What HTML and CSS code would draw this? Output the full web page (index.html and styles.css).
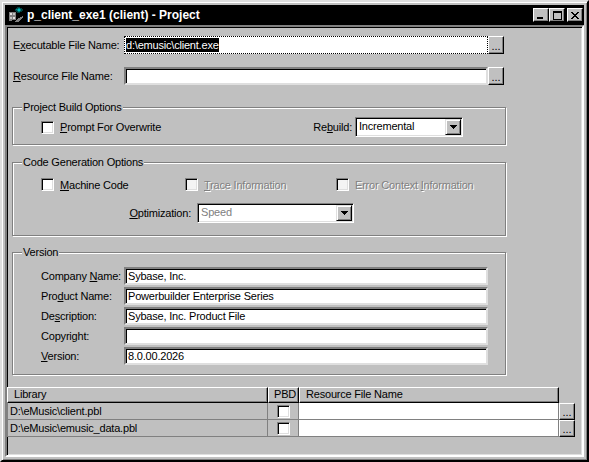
FILE: index.html
```html
<!DOCTYPE html>
<html lang="en">

<head>
    <meta charset="UTF-8">
    <meta name="viewport" content="width=device-width, initial-scale=1.0">
    <title>p_client_exe1 (client) - Project</title>
    <link rel="stylesheet" href="styles.css">
</head>

<body>
    <div class="window">
        <!-- Title bar -->
        <div class="titlebar">
            <svg class="app-icon" width="16" height="16" viewBox="0 0 16 16" shape-rendering="crispEdges">
                <rect x="1" y="5" width="3" height="3" fill="#dfdfdf" stroke="#808080" stroke-width="1"/>
                <rect x="4" y="5" width="3" height="3" fill="#c0c0c0" stroke="#808080" stroke-width="1"/>
                <rect x="1" y="9" width="3" height="3" fill="#c0c0c0" stroke="#808080" stroke-width="1"/>
                <rect x="4" y="9" width="3" height="3" fill="#dfdfdf" stroke="#808080" stroke-width="1"/>
                <rect x="1" y="12" width="3" height="2" fill="#808080"/>
                <polygon points="11,0 15,3 11,6 7,3" fill="#008080" stroke="#004040" stroke-width="1"/>
                <rect x="10" y="2" width="2" height="2" fill="#00c0c0"/>
                <polygon points="9,12 15,9 15,11 10,15 7,15" fill="#808080"/>
            </svg>
            <span class="title">p_client_exe1 (client) - Project</span>
            <div class="caption-buttons">
                <span class="cap-btn">
                    <svg width="8" height="8" viewBox="0 0 8 8" shape-rendering="crispEdges"><rect x="0" y="6" width="6" height="2" fill="#000"/></svg>
                </span>
                <span class="cap-btn">
                    <svg width="9" height="9" viewBox="0 0 9 9" shape-rendering="crispEdges"><path d="M0 0h9v9h-9z M1 2v6h7v-6z" fill="#000" fill-rule="evenodd"/></svg>
                </span>
                <span class="cap-btn close">
                    <svg width="8" height="7" viewBox="0 0 8 7" shape-rendering="crispEdges">
                        <path d="M0 0h2v1h1v1h2v-1h1v-1h2v1h-1v1h-1v1h-1v1h1v1h1v1h1v1h-2v-1h-1v-1h-2v1h-1v1h-2v-1h1v-1h1v-1h1v-1h-1v-1h-1v-1h-1z" fill="#000"/>
                    </svg>
                </span>
            </div>
        </div>

        <div class="client">
            <!-- File names -->
            <div class="file-row">
                <span class="row-label">E<u>x</u>ecutable File Name:</span>
                <div class="field focused"><span class="selected">d:\emusic\client.exe</span></div>
                <span class="browse">...</span>
            </div>
            <div class="file-row">
                <span class="row-label"><u>R</u>esource File Name:</span>
                <div class="field"></div>
                <span class="browse">...</span>
            </div>

            <!-- Project Build Options -->
            <fieldset class="group build-group">
                <legend>Project Build Options</legend>
                <div class="build-body">
                    <span class="check-item"><span class="checkbox"></span><span><u>P</u>rompt For Overwrite</span></span>
                    <span class="rebuild">
                        <span>Re<u>b</u>uild:</span>
                        <span class="dropdown rebuild-drop">
                            <span class="drop-text">Incremental</span>
                            <span class="drop-arrow"><svg width="7" height="4" viewBox="0 0 7 4" shape-rendering="crispEdges"><path d="M0 0h7v1h-1v1h-1v1h-1v1h-1v-1h-1v-1h-1v-1h-1z" fill="#000"/></svg></span>
                        </span>
                    </span>
                </div>
            </fieldset>

            <!-- Code Generation Options -->
            <fieldset class="group code-group">
                <legend>Code Generation Options</legend>
                <div class="code-checks">
                    <span class="check-item"><span class="checkbox"></span><span><u>M</u>achine Code</span></span>
                    <span class="check-item disabled"><span class="checkbox"></span><span><u>T</u>race Information</span></span>
                    <span class="check-item disabled"><span class="checkbox"></span><span>Error Context <u>I</u>nformation</span></span>
                </div>
                <div class="opt-row">
                    <span class="opt-label"><u>O</u>ptimization:</span>
                    <span class="dropdown opt-drop">
                        <span class="drop-text disabled">Speed</span>
                        <span class="drop-arrow"><svg width="7" height="4" viewBox="0 0 7 4" shape-rendering="crispEdges"><path d="M0 0h7v1h-1v1h-1v1h-1v1h-1v-1h-1v-1h-1v-1h-1z" fill="#000"/></svg></span>
                    </span>
                </div>
            </fieldset>

            <!-- Version -->
            <fieldset class="group version-group">
                <legend>Version</legend>
                <div class="version-body">
                    <div class="version-row"><span class="version-label">Company <u>N</u>ame:</span><div class="field">Sybase, Inc.</div></div>
                    <div class="version-row"><span class="version-label">Pro<u>d</u>uct Name:</span><div class="field">Powerbuilder Enterprise Series</div></div>
                    <div class="version-row"><span class="version-label">De<u>s</u>cription:</span><div class="field">Sybase, Inc. Product File</div></div>
                    <div class="version-row"><span class="version-label">Copyright:</span><div class="field"></div></div>
                    <div class="version-row"><span class="version-label"><u>V</u>ersion:</span><div class="field">8.0.00.2026</div></div>
                </div>
            </fieldset>

            <!-- Library list -->
            <div class="lib-grid">
                <span class="head">Library</span>
                <span class="head head-pbd">PBD</span>
                <span class="head">Resource File Name</span>
                <span></span>

                <span class="cell cell-lib">D:\eMusic\client.pbl</span>
                <span class="cell cell-pbd"><span class="checkbox"></span></span>
                <span class="cell cell-res"></span>
                <span class="browse grid-browse">...</span>

                <span class="cell cell-lib">D:\eMusic\emusic_data.pbl</span>
                <span class="cell cell-pbd"><span class="checkbox"></span></span>
                <span class="cell cell-res"></span>
                <span class="browse grid-browse">...</span>
            </div>
        </div>
    </div>
</body>

</html>
```

FILE: styles.css
```css
body {
    margin: 0;
    font-family: "Liberation Sans", Arial, sans-serif;
    font-size: 11px;
    letter-spacing: -0.2px;
    color: #000;
    background: #c0c0c0;
}

u {
    text-decoration: underline;
    text-underline-offset: 1px;
}

.window {
    width: 589px;
    height: 462px;
    box-sizing: border-box;
    display: flex;
    flex-direction: column;
    padding: 3px;
    background: #c0c0c0;
    border: 2px solid;
    border-color: #dfdfdf #000 #000 #dfdfdf;
    box-shadow: inset 1px 1px #fff, inset -1px -1px #808080;
}

/* Title bar */
.titlebar {
    height: 20px;
    flex-shrink: 0;
    display: flex;
    align-items: center;
    padding: 0 1px 0 3px;
    background: #000;
    color: #fff;
}

.app-icon {
    flex-shrink: 0;
}

.title {
    margin-left: 3px;
    font-size: 12px;
    font-weight: bold;
    letter-spacing: 0;
}

.caption-buttons {
    margin-left: auto;
    display: flex;
}

.cap-btn {
    width: 16px;
    height: 14px;
    box-sizing: border-box;
    display: flex;
    align-items: center;
    justify-content: center;
    background: #c0c0c0;
    border: 1px solid;
    border-color: #fff #000 #000 #fff;
    box-shadow: inset -1px -1px #808080;
}

.cap-btn.close {
    margin-left: 2px;
}

/* Client area */
.client {
    flex: 1;
    border: 2px solid;
    border-color: #808080 #fff #fff #808080;
    box-shadow: inset 1px 1px #000, inset -1px -1px #dfdfdf;
    padding-top: 9px;
}

.file-row {
    display: flex;
    align-items: center;
    height: 18px;
    padding-left: 6px;
}

.file-row + .file-row {
    margin-top: 13px;
}

.row-label {
    width: 111px;
    flex-shrink: 0;
}

.field {
    width: 364px;
    height: 18px;
    box-sizing: border-box;
    flex-shrink: 0;
    padding-left: 2px;
    line-height: 14px;
    background: #fff;
    border: 2px solid;
    border-color: #808080 #dfdfdf #dfdfdf #808080;
    box-shadow: inset 1px 1px #000;
    white-space: nowrap;
}

.field.focused {
    border: 1px dotted #000;
    box-shadow: none;
    padding: 1px 0 0 1px;
}

.selected {
    display: inline-block;
    background: #000;
    color: #fff;
    line-height: 14px;
}

.browse {
    width: 16px;
    height: 18px;
    box-sizing: border-box;
    display: flex;
    align-items: flex-end;
    justify-content: center;
    padding-bottom: 2px;
    line-height: 10px;
    letter-spacing: 0;
    background: #c0c0c0;
    border: 1px solid;
    border-color: #fff #000 #000 #fff;
    box-shadow: inset -1px -1px #808080;
}

/* Group boxes */
.group {
    width: 494px;
    box-sizing: border-box;
    min-width: 0;
    margin: 15px 0 0 5px;
    padding: 0;
    border: 1px solid #808080;
    box-shadow: inset 1px 1px #fff, 1px 1px #fff;
}

.group legend {
    margin-left: 9px;
    padding: 0 1px;
    line-height: 15px;
    background: #c0c0c0;
}

.build-body {
    display: flex;
    align-items: center;
    padding: 2px 42px 7px 28px;
}

.check-item {
    display: flex;
    align-items: center;
    gap: 6px;
    white-space: nowrap;
}

.checkbox {
    width: 13px;
    height: 13px;
    box-sizing: border-box;
    flex-shrink: 0;
    background: #fff;
    border: 1px solid;
    border-color: #808080 #fff #fff #808080;
    box-shadow: inset 1px 1px #000, inset -1px -1px #dfdfdf;
}

.disabled {
    color: #808080;
    text-shadow: 1px 1px #fff;
}

.disabled .checkbox {
    background: #f4f4f4;
}

.rebuild {
    margin-left: auto;
    display: flex;
    align-items: center;
    gap: 3px;
}

.dropdown {
    height: 20px;
    box-sizing: border-box;
    display: flex;
    align-items: center;
    background: #fff;
    border: 1px solid;
    border-color: #808080 #fff #fff #808080;
    box-shadow: inset 1px 1px #000, inset -1px -1px #dfdfdf;
    padding: 1px;
}

.drop-text {
    flex: 1;
    padding-left: 2px;
    padding-bottom: 2px;
}

.drop-arrow {
    width: 16px;
    height: 16px;
    box-sizing: border-box;
    display: flex;
    align-items: center;
    justify-content: center;
    background: #c0c0c0;
    border: 1px solid;
    border-color: #dfdfdf #000 #000 #dfdfdf;
    box-shadow: inset 1px 1px #fff, inset -1px -1px #808080;
}

.rebuild-drop {
    width: 108px;
}

.code-group {
    margin-top: 10px;
}

.code-checks {
    display: grid;
    grid-template-columns: 144px 151px auto;
    padding: 8px 0 0 28px;
}

.opt-row {
    display: flex;
    align-items: center;
    padding: 12px 0 12px 28px;
}

.opt-label {
    width: 150px;
    margin-right: 6px;
    text-align: right;
}

.opt-drop {
    width: 157px;
}

.version-group {
    margin-top: 9px;
}

.version-body {
    display: flex;
    flex-direction: column;
    gap: 2px;
    padding: 7px 0 9px 28px;
}

.version-row {
    display: flex;
    align-items: center;
}

.version-label {
    width: 83px;
    flex-shrink: 0;
}

/* Library grid */
.lib-grid {
    margin-top: 12px;
    display: grid;
    grid-template-columns: 261px 31px 260px 19px;
    grid-auto-rows: 17px;
    grid-template-rows: 16px;
}

.head {
    box-sizing: border-box;
    padding-left: 6px;
    line-height: 13px;
    border: 1px solid;
    border-color: #fff #000 #000 #fff;
    box-shadow: inset -1px -1px #808080;
    white-space: nowrap;
}

.head-pbd {
    padding-left: 5px;
}

.cell {
    box-sizing: border-box;
    display: flex;
    align-items: center;
    border-right: 1px solid #808080;
    border-bottom: 1px solid #808080;
    white-space: nowrap;
}

.cell-lib {
    border-left: 1px solid #808080;
    padding-left: 2px;
}

.cell-pbd {
    justify-content: center;
}

.cell-res {
    background: #fff;
}

.grid-browse {
    height: 17px;
}
```
